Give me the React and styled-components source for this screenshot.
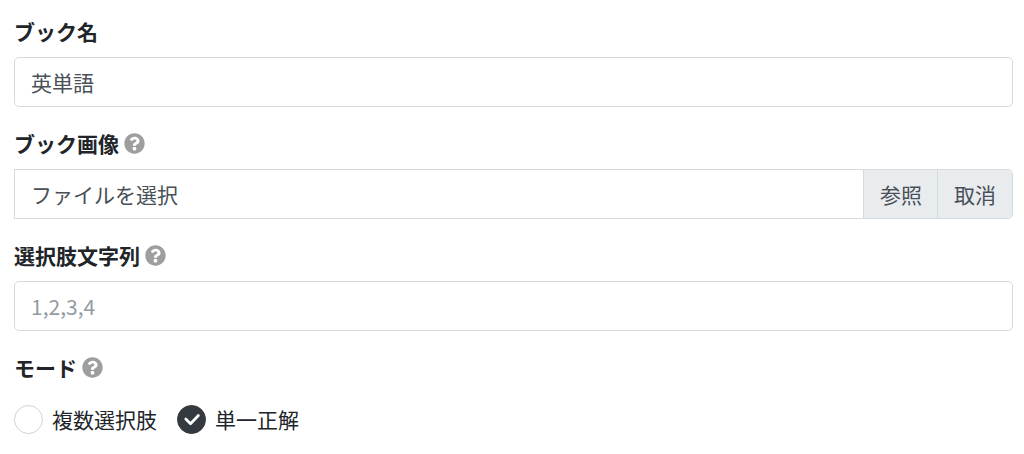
import React, { useRef, useState } from "react";
import styled, { createGlobalStyle } from "styled-components";
import { FaQuestionCircle } from "react-icons/fa";

const GlobalStyle = createGlobalStyle`
  *, *::before, *::after { box-sizing: border-box; }
  body {
    margin: 0;
    background: #fff;
    color: #212529;
    font-family: "Noto Sans CJK JP", sans-serif;
    font-size: 21px;
    line-height: 32px;
  }
`;

const Form = styled.form`
  display: flex;
  flex-direction: column;
  gap: 20px;
  padding: 15px 11px 15px 14px;
`;

const Field = styled.div`
  display: flex;
  flex-direction: column;
  gap: 10px;
`;

const RadioField = styled.fieldset`
  margin: 0;
  padding: 0;
  border: 0;
  min-width: 0;
`;

const Heading = styled.div`
  display: flex;
  align-items: center;
  gap: 5px;
  height: 32px;
  font-weight: 700;
`;

const Legend = styled.legend`
  padding: 0;
  margin-bottom: 20px;
`;

const HelpButton = styled.button`
  display: flex;
  padding: 1px 0 0;
  border: 0;
  background: none;
  color: #9e9e9e;
  font-size: 21px;
  cursor: pointer;
`;

const TextInput = styled.input`
  width: 100%;
  height: 50px;
  padding: 0 16px;
  border: 1px solid #d5dade;
  border-radius: 5px;
  background: #fff;
  color: #495057;
  font: inherit;

  &::placeholder {
    color: #939ba2;
    opacity: 1;
  }
`;

const FileGroup = styled.div`
  display: flex;
  height: 50px;
  border: 1px solid #d5dade;
  border-radius: 0 5px 5px 0;
  color: #495057;
`;

const FilePicker = styled.label`
  display: flex;
  flex: 1;
  min-width: 0;
  cursor: pointer;
`;

const FileName = styled.span`
  flex: 1;
  padding: 8px 16px;
  overflow: hidden;
  white-space: nowrap;
  text-overflow: ellipsis;
`;

const Browse = styled.span`
  padding: 8px 15px 8px 16px;
  border-left: 1px solid #d5dade;
  background: #e9ecef;
`;

const ClearButton = styled.button`
  padding: 0 16px;
  border: 0;
  border-left: 1px solid #d5dade;
  border-radius: 0 4px 4px 0;
  background: #e9ecef;
  color: inherit;
  font: inherit;
  cursor: pointer;
`;

const HiddenFile = styled.input`
  position: absolute;
  width: 1px;
  height: 1px;
  opacity: 0;
`;

const Options = styled.div`
  display: flex;
  flex-wrap: wrap;
  gap: 20px;
`;

const Option = styled.label`
  display: flex;
  align-items: center;
  gap: 9px;
  cursor: pointer;
`;

const Circle = styled.span`
  display: grid;
  width: 29px;
  height: 29px;

  & > * {
    grid-area: 1 / 1;
  }

  svg {
    pointer-events: none;
  }
`;

const Radio = styled.input`
  appearance: none;
  width: 29px;
  height: 29px;
  margin: 0;
  border: 1px solid #d3d3cf;
  border-radius: 50%;
  background: #fff;

  &:checked {
    border-color: #343a40;
    background: #343a40;
  }
`;

function Help({ topic }) {
  return (
    <HelpButton type="button" aria-label={topic + "のヘルプ"}>
      <FaQuestionCircle />
    </HelpButton>
  );
}

function ModeOption({ value, checked, onSelect }) {
  return (
    <Option>
      <Circle>
        <Radio type="radio" name="mode" value={value} checked={checked} onChange={() => onSelect(value)} />
        {checked && (
          <svg width="29" height="29" viewBox="0 0 29 29" fill="none" aria-hidden="true">
            <path d="M8.8 14l4.7 4.7 7.9-8.2" stroke="#fff" strokeWidth="2.7" strokeLinecap="round" strokeLinejoin="round" />
          </svg>
        )}
      </Circle>
      {value}
    </Option>
  );
}

export default function App() {
  const [mode, setMode] = useState("単一正解");
  const [fileName, setFileName] = useState("");
  const fileRef = useRef(null);

  const clearFile = () => {
    fileRef.current.value = "";
    setFileName("");
  };

  return (
    <>
      <GlobalStyle />
      <Form>
        <Field>
          <Heading>
            <label htmlFor="book-name">ブック名</label>
          </Heading>
          <TextInput id="book-name" type="text" defaultValue="英単語" />
        </Field>
        <Field>
          <Heading>
            <label htmlFor="book-image">ブック画像</label>
            <Help topic="ブック画像" />
          </Heading>
          <FileGroup>
            <FilePicker>
              <HiddenFile
                ref={fileRef}
                id="book-image"
                type="file"
                accept="image/*"
                onChange={(e) => setFileName(e.target.files[0]?.name ?? "")}
              />
              <FileName>{fileName || "ファイルを選択"}</FileName>
              <Browse>参照</Browse>
            </FilePicker>
            <ClearButton type="button" onClick={clearFile}>取消</ClearButton>
          </FileGroup>
        </Field>
        <Field>
          <Heading>
            <label htmlFor="choices">選択肢文字列</label>
            <Help topic="選択肢文字列" />
          </Heading>
          <TextInput id="choices" type="text" placeholder="1,2,3,4" />
        </Field>
        <RadioField>
          <Legend>
            <Heading>
              モード
              <Help topic="モード" />
            </Heading>
          </Legend>
          <Options>
            <ModeOption value="複数選択肢" checked={mode === "複数選択肢"} onSelect={setMode} />
            <ModeOption value="単一正解" checked={mode === "単一正解"} onSelect={setMode} />
          </Options>
        </RadioField>
      </Form>
    </>
  );
}
